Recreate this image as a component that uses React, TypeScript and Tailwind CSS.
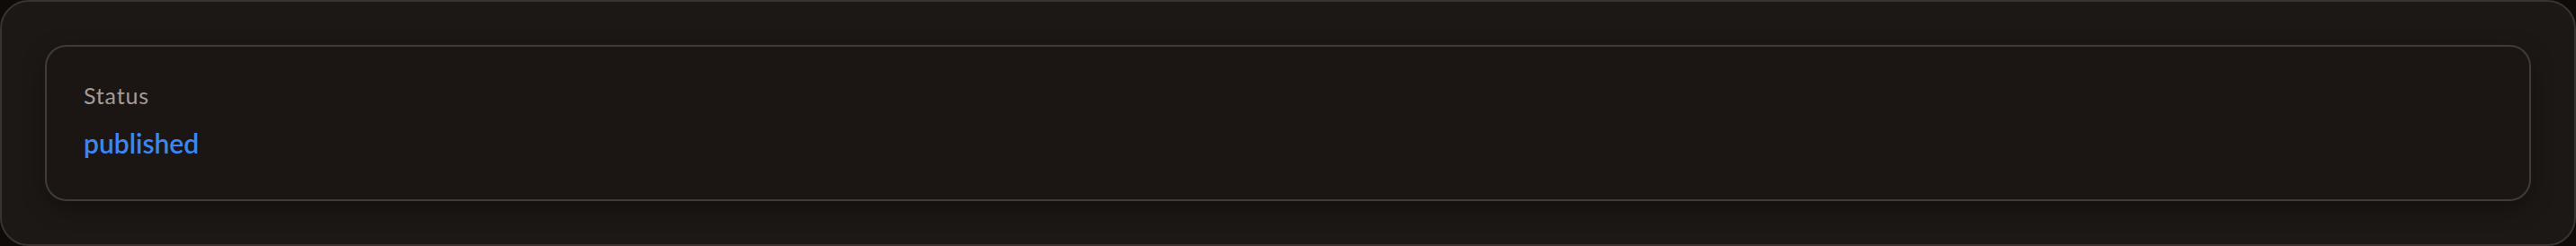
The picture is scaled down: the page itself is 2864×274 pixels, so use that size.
import React from "react";

export default function App() {
  return (
    <div className="w-[2864px] h-[274px] bg-[#0e0b09]" style={{ fontFamily: "Lato, 'Noto Sans', sans-serif" }}>
      <div className="h-[274px] rounded-[32px] border-2 border-[#3a3330] bg-[#1c1815] p-[48px]">
        <div className="h-[174px] rounded-[24px] border-2 border-[#433a36] bg-[#1b1613] pl-[41px] pt-[39px] shadow-[0_8px_24px_rgba(0,0,0,0.35)]">
          <div className="text-[25px] leading-[30px] text-[#a59b93] tracking-[0.8px]">Status</div>
          <div className="mt-[16px] text-[30px] leading-[44px] font-semibold text-[#3b86f7]">published</div>
        </div>
      </div>
    </div>
  );
}
